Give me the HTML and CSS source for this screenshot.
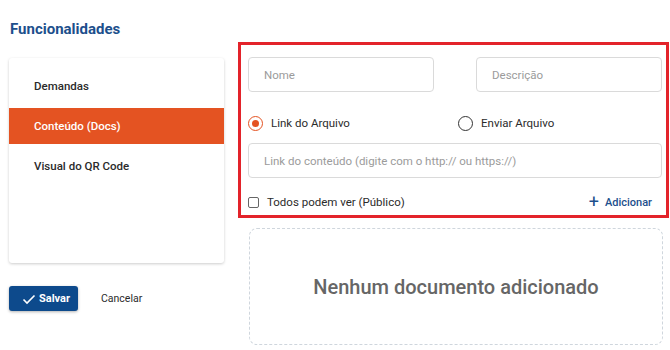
FILE: index.html
```html
<!DOCTYPE html>
<html lang="pt-BR">
<head>
    <meta charset="UTF-8">
    <meta name="viewport" content="width=device-width, initial-scale=1.0">
    <title>Funcionalidades</title>
    <link rel="stylesheet" href="styles.css">
</head>
<body>
    <div class="page">
        <div class="side">
            <h2 class="title">Funcionalidades</h2>

            <div class="menu">
                <div class="menu-item">Demandas</div>
                <div class="menu-item active">Conteúdo (Docs)</div>
                <div class="menu-item">Visual do QR Code</div>
            </div>

            <div class="actions">
                <button class="btn-save">
                    <svg width="14" height="14" viewBox="0 0 14 14">
                        <polyline points="1.5,7.5 5,11 12.5,3.5" fill="none" stroke="#fff" stroke-width="1.6"/>
                    </svg>
                    Salvar
                </button>
                <button class="btn-cancel">Cancelar</button>
            </div>
        </div>

        <div class="main">
            <div class="form-box">
                <div class="row-two">
                    <input class="field" type="text" placeholder="Nome">
                    <input class="field" type="text" placeholder="Descrição">
                </div>

                <div class="radio-row">
                    <label class="radio">
                        <span class="radio-dot checked"></span>
                        Link do Arquivo
                    </label>
                    <label class="radio">
                        <span class="radio-dot"></span>
                        Enviar Arquivo
                    </label>
                </div>

                <input class="field wide" type="text" placeholder="Link do conteúdo (digite com o http:// ou https://)">

                <div class="bottom-row">
                    <label class="check">
                        <span class="check-box"></span>
                        Todos podem ver (Público)
                    </label>
                    <button class="btn-add"><span class="plus">+</span> Adicionar</button>
                </div>
            </div>

            <div class="empty">Nenhum documento adicionado</div>
        </div>
    </div>
</body>
</html>
```

FILE: styles.css
```css
body {
    margin: 0;
    font-family: Roboto, "Liberation Sans", sans-serif;
    color: #333;
    background-color: #fff;
}

.page {
    display: flex;
    gap: 14px;
    padding: 20px 0 0 9px;
}

.side {
    width: 215px;
}

.title {
    margin: 0 0 20px 1px;
    font-size: 15px;
    line-height: 18px;
    font-weight: 700;
    color: #1d4f8c;
}

.menu {
    height: 185px;
    padding: 10px 0;
    background-color: #fff;
    border-radius: 3px;
    box-shadow: 0 1px 3px rgba(0, 0, 0, 0.2);
}

.menu-item {
    height: 36px;
    line-height: 36px;
    margin-bottom: 4px;
    padding-left: 25px;
    font-size: 11.5px;
    font-weight: 500;
    color: #2b2b2b;
}

.menu-item.active {
    background-color: #e45322;
    color: #fff;
}

.actions {
    display: flex;
    align-items: center;
    gap: 23px;
    margin-top: 23px;
}

.btn-save {
    display: flex;
    align-items: center;
    gap: 3px;
    height: 25px;
    width: 69px;
    padding: 0 0 0 13px;
    background-color: #0d4a8c;
    color: #fff;
    border: none;
    border-radius: 3px;
    box-shadow: 0 1px 3px rgba(0, 0, 0, 0.3);
    font-family: inherit;
    font-size: 11px;
    font-weight: 700;
}

.btn-cancel {
    background: none;
    border: none;
    padding: 0;
    font-family: inherit;
    font-size: 10.5px;
    color: #2b2b2b;
}

.main {
    margin-top: 22px;
    width: 431px;
}

.form-box {
    border: 3px solid #e3232a;
    padding: 12px 4px 3px 7px;
}

.row-two {
    display: grid;
    grid-template-columns: 186px 186px;
    gap: 42px;
}

.field {
    box-sizing: border-box;
    height: 35px;
    padding: 0 15px;
    border: 1px solid #dadada;
    border-radius: 4px;
    font-family: inherit;
    font-size: 11.5px;
    color: #333;
    outline: none;
}

.field::placeholder {
    color: #9b9b9b;
}

.field.wide {
    display: block;
    width: 414px;
    margin-top: 10px;
}

.radio-row {
    display: grid;
    grid-template-columns: 210px auto;
    margin-top: 21px;
    height: 20px;
    align-items: center;
}

.radio {
    display: flex;
    align-items: center;
    gap: 8px;
    font-size: 11.5px;
    color: #2b2b2b;
}

.radio-dot {
    box-sizing: border-box;
    width: 15px;
    height: 15px;
    border: 1.5px solid #333;
    border-radius: 50%;
    display: flex;
    align-items: center;
    justify-content: center;
}

.radio-dot.checked {
    border-color: #e45322;
}

.radio-dot.checked::after {
    content: "";
    width: 7px;
    height: 7px;
    border-radius: 50%;
    background-color: #e45322;
}

.bottom-row {
    display: flex;
    justify-content: space-between;
    align-items: center;
    height: 20px;
    margin-top: 14px;
}

.check {
    display: flex;
    align-items: center;
    gap: 8px;
    font-size: 11.5px;
    color: #2b2b2b;
}

.check-box {
    box-sizing: border-box;
    width: 11px;
    height: 11px;
    border: 1.5px solid #666;
    border-radius: 2px;
}

.btn-add {
    background: none;
    border: none;
    padding: 0 10px 0 0;
    font-family: inherit;
    font-size: 11px;
    font-weight: 500;
    color: #1d4f8c;
    display: flex;
    align-items: center;
    gap: 6px;
}

.plus {
    font-size: 18px;
    font-weight: 400;
    line-height: 1;
}

.empty {
    box-sizing: border-box;
    height: 117px;
    width: 414px;
    margin: 10px 0 0 11px;
    border: 1px dashed #cfd6dd;
    border-radius: 8px;
    display: flex;
    align-items: center;
    justify-content: center;
    font-size: 20px;
    font-weight: 500;
    color: #666;
}
```
